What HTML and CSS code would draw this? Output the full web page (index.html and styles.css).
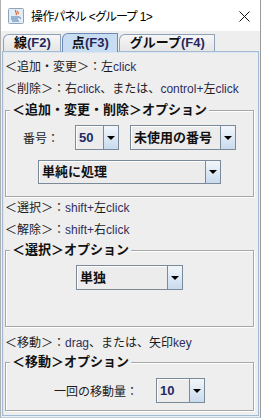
FILE: index.html
```html
<!DOCTYPE html>
<html lang="ja">

<head>
    <meta charset="UTF-8">
    <meta name="viewport" content="width=device-width, initial-scale=1.0">
    <title>操作パネル</title>
    <link rel="stylesheet" href="styles.css">
</head>

<body>
    <div class="window">
        <div class="titlebar">
            <svg class="app-icon" width="16" height="16" viewBox="0 0 16 16">
                <rect x="0.5" y="0.5" width="15" height="15" rx="1" fill="#e4edf6" stroke="#8ea4bd" />
                <path d="M8 2c-2 2 2 3 0 5M10 3c-1 1 1 2 0 3" stroke="#e0602a" stroke-width="1.2" fill="none" />
                <path d="M3 9h8c1 0 2 1 1 2M3 11h7M4 13h7" stroke="#4a78b0" stroke-width="1" fill="none" />
            </svg>
            <span class="title">操作パネル &lt;グループ 1&gt;</span>
            <svg class="close" width="11" height="11" viewBox="0 0 11 11">
                <path d="M0.5 0.5L10.5 10.5M10.5 0.5L0.5 10.5" stroke="#111" stroke-width="1" />
            </svg>
        </div>

        <div class="tabs">
            <div class="tab">線<span class="en">(F2)</span></div>
            <div class="tab selected">点<span class="en">(F3)</span></div>
            <div class="tab">グループ<span class="en">(F4)</span></div>
        </div>

        <div class="panel">
            <div class="row">＜追加・変更＞：左<span class="en">click</span></div>
            <div class="row">＜削除＞：右<span class="en">click</span>、または、<span class="en">control+</span>左<span class="en">click</span></div>

            <fieldset class="group edit-group">
                <legend>＜追加・変更・削除＞オプション</legend>
                <div class="line">
                    <span class="field-label num-label">番号：</span>
                    <div class="combo combo-num"><span class="value en">50</span><span class="arrow"></span></div>
                    <div class="combo combo-kind"><span class="value">未使用の番号</span><span class="arrow"></span></div>
                </div>
                <div class="line second">
                    <div class="combo combo-proc"><span class="value">単純に処理</span><span class="arrow"></span></div>
                </div>
            </fieldset>

            <div class="row">＜選択＞：<span class="en">shift+</span>左<span class="en">click</span></div>
            <div class="row">＜解除＞：<span class="en">shift+</span>右<span class="en">click</span></div>

            <fieldset class="group select-group">
                <legend>＜選択＞オプション</legend>
                <div class="line">
                    <div class="combo combo-sel"><span class="value">単独</span><span class="arrow"></span></div>
                </div>
            </fieldset>

            <div class="row move-row">＜移動＞：<span class="en">drag</span>、または、矢印<span class="en">key</span></div>

            <fieldset class="group move-group">
                <legend>＜移動＞オプション</legend>
                <div class="line">
                    <span class="field-label step-label">一回の移動量：</span>
                    <div class="combo combo-step"><span class="value en">10</span><span class="arrow"></span></div>
                </div>
            </fieldset>
        </div>
    </div>
</body>

</html>
```

FILE: styles.css
```css
body {
    margin: 0;
    padding: 0;
    background-color: #fff;
    font-family: 'Liberation Sans', 'Noto Sans CJK JP', sans-serif;
    font-size: 12px;
    color: #1c1c1c;
}

.window {
    width: 261px;
    height: 418px;
    box-sizing: border-box;
    border-left: 1px solid #b0b0b0;
    border-right: 1px solid #9a9a9a;
    border-bottom: 1px solid #b8cfe5;
    background-color: #eeeeee;
    display: flex;
    flex-direction: column;
}

/* barra de titulo */
.titlebar {
    height: 31px;
    background-color: #fff;
    display: flex;
    align-items: center;
    padding: 0 10px 0 7px;
    flex-shrink: 0;
}

.app-icon {
    margin-right: 7px;
}

.title {
    flex: 1;
    font-size: 12px;
    letter-spacing: -0.6px;
    color: #000;
    font-feature-settings: "palt";
}

.close {
    margin-top: 1px;
}

/* pestañas */
.tabs {
    height: 20px;
    display: flex;
    align-items: flex-end;
    padding-left: 2px;
    flex-shrink: 0;
}

.tab {
    height: 17px;
    box-sizing: border-box;
    padding: 0 9px 0 10px;
    margin-right: 1px;
    border: 1px solid #8da2b8;
    border-bottom: none;
    border-top-left-radius: 6px;
    background: linear-gradient(#f6f6f6, #e6e6e6);
    font-weight: bold;
    font-size: 13px;
    line-height: 16px;
    color: #111;
}

.tab .en {
    color: #26265a;
}

.tab.selected {
    height: 19px;
    margin-bottom: -1px;
    position: relative;
    padding: 0 8px 0 9px;
    background: #c8ddf2;
    border-color: #6f8bb5;
    line-height: 17px;
}

/* panel */
.panel {
    flex: 1;
    margin: 0 1px 1px 1px;
    padding: 4px 4px 0 2px;
    border: 1px solid #a3bcd6;
    box-shadow: inset 1px 1px 0 #dbe6f1;
}

.row {
    height: 22px;
    line-height: 22px;
    white-space: nowrap;
}

.en {
    color: #2e2e62;
}

.move-row {
    margin-top: 5px;
}

.group {
    margin: 0;
    padding: 7px 0 12px;
    border: 1px solid #a6a6a6;
    box-shadow: inset 1px 1px 0 #fff, 1px 1px 0 #fff;
    min-width: 0;
}

.group legend {
    margin-left: 4px;
    padding: 0 2px;
    background-color: #eeeeee;
    font-weight: bold;
    font-size: 13px;
    line-height: 16px;
    color: #111;
}

.edit-group {
    margin-top: 2px;
}

.select-group {
    margin-top: 1px;
    padding-bottom: 36px;
}

.move-group {
    padding-top: 8px;
    padding-bottom: 7px;
}

.line {
    display: flex;
    justify-content: center;
    align-items: center;
}

.line.second {
    margin-top: 10px;
}

.field-label {
    font-size: 12px;
    color: #1c1c1c;
}

.num-label {
    margin-right: 16px;
}

.step-label {
    margin-right: 18px;
}

/* combos */
.combo {
    height: 25px;
    box-sizing: border-box;
    display: flex;
    border: 1px solid #7a8a99;
    background-color: #ececec;
}

.combo .value {
    flex: 1;
    padding-left: 3px;
    font-weight: bold;
    font-size: 13px;
    line-height: 23px;
    color: #111;
    box-shadow: inset 1px 1px 0 #fff;
    white-space: nowrap;
    overflow: hidden;
}

.combo .value.en {
    color: #1e2a66;
}

.combo .arrow {
    width: 14px;
    border-left: 1px solid #7a8a99;
    background: linear-gradient(#f2f6fb, #c9dbee);
    display: flex;
    align-items: center;
    justify-content: center;
}

.combo .arrow::after {
    content: '';
    border-left: 4px solid transparent;
    border-right: 4px solid transparent;
    border-top: 4px solid #000;
}

.combo-num {
    width: 44px;
}

.combo-kind {
    width: 106px;
    margin-left: 11px;
}

.combo-proc {
    width: 183px;
    height: 24px;
}

.combo-proc .value {
    line-height: 22px;
}

.combo-sel {
    width: 107px;
}

.combo-step {
    width: 49px;
}
```
